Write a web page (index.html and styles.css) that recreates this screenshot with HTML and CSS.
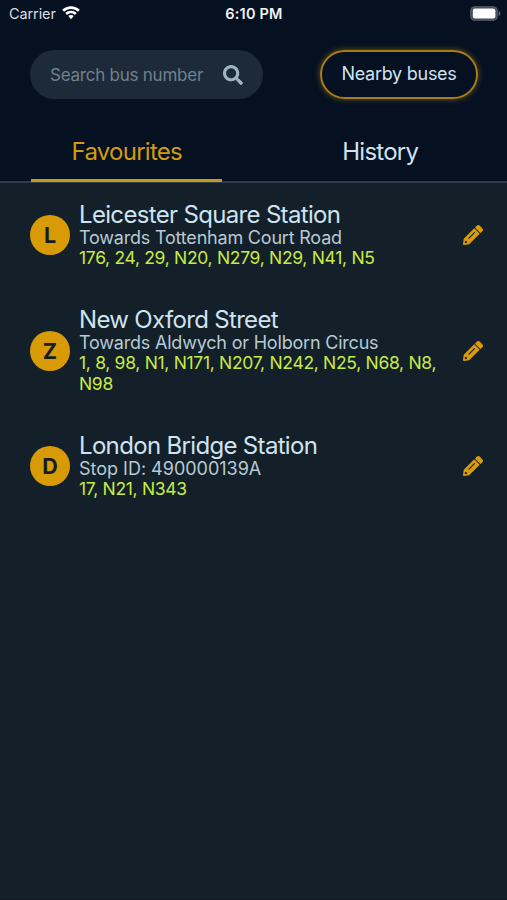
FILE: index.html
```html
<!DOCTYPE html>
<html lang="en">
<head>
<meta charset="utf-8">
<title>Buses</title>
<link rel="stylesheet" href="styles.css">
</head>
<body>
<svg class="defs" aria-hidden="true">
  <symbol id="pencil" viewBox="0 0 512 512"><path fill-rule="evenodd" d="M500 154L456 198C450 204 443 204 437 198L314 75C308 69 308 62 314 56L358 12C379-5 406-5 425 14L498 87C517 106 519 133 500 154ZM280 91L18 354 0 484C-2 501 11 514 28 512L158 494 421 232C426 227 426 220 421 215L297 91C292 86 285 86 280 91ZM143 325L281 187C288 180 296 180 302 186S308 200 301 207L163 345C156 352 149 352 143 346S136 332 143 325ZM75 406L106 437 96 463 66 467 45 446 49 416Z"/></symbol>
</svg>
<header class="header">
  <div class="status">
    <div class="carrier"><span>Carrier</span>
      <svg class="wifi" viewBox="0 0 18 14"><path d="M9 0.3C5.6.3 2.5 1.6.2 3.8L2 5.7C3.800 4 6.300 2.900 9 2.900s5.200 1.100 7 2.800l1.800-1.900C15.500 1.600 12.400.3 9 .3z"/><path d="M9 4.700c-2.200 0-4.200.9-5.700 2.300l1.800 1.900C6.100 7.900 7.500 7.300 9 7.300s2.900.6 3.900 1.600L14.700 7C13.200 5.600 11.200 4.700 9 4.700z"/><path d="M9 9c-1.100 0-2 .4-2.700 1.100L9 13.300l2.700-3.200C11 9.400 10.100 9 9 9z"/></svg>
    </div>
    <div class="time">6:10 PM</div>
    <svg class="battery" viewBox="0 0 31 15"><rect x=".8" y=".8" width="26.400" height="13.400" rx="4" fill="#3c4552" stroke="#555e6a" stroke-width="1.300"/><rect x="2.800" y="2.600" width="22.600" height="9.800" rx="2" fill="#fff"/><path d="M28.700 5v5c1-.4 1.700-1.400 1.700-2.500S29.700 5.400 28.700 5z" fill="#626b78"/></svg>
  </div>
  <div class="tools">
    <div class="search"><span>Search bus number</span>
      <svg class="lens" viewBox="0 0 512 512"><path d="M505 442.700L405.300 343c-4.500-4.500-10.600-7-17-7H372c27.600-35.300 44-79.700 44-128C416 93.100 322.900 0 208 0S0 93.100 0 208s93.100 208 208 208c48.300 0 92.700-16.400 128-44v16.300c0 6.400 2.500 12.500 7 17l99.700 99.700c9.400 9.400 24.600 9.400 33.900 0l28.300-28.300c9.400-9.400 9.400-24.600.1-34zM208 336c-70.700 0-128-57.200-128-128 0-70.700 57.200-128 128-128 70.700 0 128 57.200 128 128 0 70.700-57.200 128-128 128z"/></svg>
    </div>
    <div class="nearby">Nearby buses</div>
  </div>
  <nav class="tabs">
    <div class="tab"><span class="label active">Favourites</span></div>
    <div class="tab"><span class="label">History</span></div>
  </nav>
</header>
<main class="stops">
  <article class="stop">
    <div class="letter">L</div>
    <div class="info"><h2>Leicester Square Station</h2><p class="desc">Towards Tottenham Court Road</p><p class="routes">176, 24, 29, N20, N279, N29, N41, N5</p></div>
    <svg class="edit"><use href="#pencil"/></svg>
  </article>
  <article class="stop">
    <div class="letter">Z</div>
    <div class="info"><h2>New Oxford Street</h2><p class="desc">Towards Aldwych or Holborn Circus</p><p class="routes">1, 8, 98, N1, N171, N207, N242, N25, N68, N8,<br>N98</p></div>
    <svg class="edit"><use href="#pencil"/></svg>
  </article>
  <article class="stop">
    <div class="letter">D</div>
    <div class="info"><h2>London Bridge Station</h2><p class="desc stop-id">Stop ID: 490000139A</p><p class="routes">17, N21, N343</p></div>
    <svg class="edit"><use href="#pencil"/></svg>
  </article>
</main>
</body>
</html>
```
FILE: styles.css
```css
* { box-sizing: border-box; }
body { margin: 0; height: 900px; overflow: hidden; background: #132029; color: #cfe3f0; font-family: Inter, "Liberation Sans", sans-serif; border-bottom: 1px solid #171a26; }
h2, p { margin: 0; font-weight: 400; white-space: nowrap; }
svg { display: block; flex: none; }
.defs { display: none; }
.header { height: 183px; background: #051021; border-bottom: 2px solid #303c4b; }
.status { height: 28px; display: grid; grid-template-columns: 1fr auto 1fr; align-items: center; padding: 0 6px 0 9px; color: #f0f3f6; }
.carrier { display: flex; align-items: center; gap: 6px; font-size: 14.5px; letter-spacing: -0.1px; color: #d9dee4; margin-top: -2px; }
.wifi { width: 18px; height: 14px; fill: #fff; }
.time { font-size: 14.5px; font-weight: 600; letter-spacing: 0.2px; margin: -1px 2px 0 0; }
.battery { width: 31px; height: 15px; justify-self: end; margin-top: -1px; }
.tools { display: flex; justify-content: space-between; padding: 22px 29px 0 30px; }
.search { width: 233px; height: 49px; border-radius: 25px; background: #1d2a38; display: flex; align-items: center; justify-content: space-between; padding: 0 20px; font-size: 17px; letter-spacing: -0.24px; color: #71818e; white-space: nowrap; }
.lens { width: 20px; height: 20px; fill: #a3b4c1; }
.nearby { width: 158px; height: 49px; border-radius: 25px; border: 2px solid #a67d17; box-shadow: 0 0 6px #b98a1690; display: flex; align-items: center; justify-content: center; font-size: 18px; letter-spacing: -0.27px; white-space: nowrap; padding-bottom: 2px; }
.tabs { display: grid; grid-template-columns: 1fr 1fr; height: 84px; }
.tab { display: flex; justify-content: center; padding-top: 22px; }
.label { display: flex; align-items: center; justify-content: center; width: 191px; height: 61px; padding-top: 2px; font-size: 24px; letter-spacing: -0.75px; border-bottom: 3px solid transparent; }
.active { color: #d39b12; border-color: #c79a19; }
.stops { display: flex; flex-direction: column; gap: 38.4px; padding: 18.6px 24px 0 30px; }
.stop { display: flex; align-items: center; }
.letter { width: 40px; height: 40px; border-radius: 50%; background: #d99b05; color: #141d23; font-size: 21.5px; font-weight: 700; display: flex; align-items: center; justify-content: center; flex: none; }
.info { flex: 1; min-width: 0; padding-left: 9px; }
.info h2 { font-size: 24px; line-height: 26px; letter-spacing: -0.67px; }
.desc { font-size: 18px; line-height: 20.2px; letter-spacing: -0.2px; color: #b7cad5; }
.stop-id { letter-spacing: -0.01px; }
.routes { font-size: 17.5px; line-height: 20.7px; letter-spacing: -0.31px; color: #c8ea46; }
.edit { width: 20px; height: 20px; fill: #d99b0b; }
```
